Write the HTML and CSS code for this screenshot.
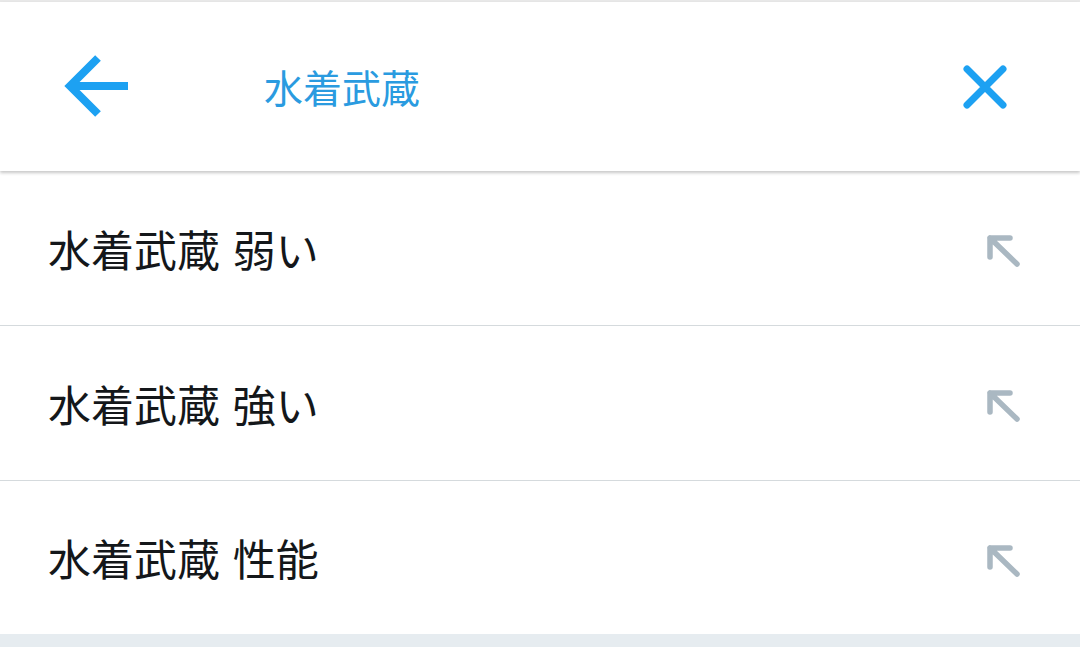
FILE: index.html
```html
<!DOCTYPE html>
<html lang="ja">
<head>
<meta charset="utf-8">
<link rel="stylesheet" href="styles.css">
</head>
<body>
<div class="page">
  <div class="topstrip"></div>
  <header class="header">
    <svg class="back" width="72" height="70" viewBox="0 0 72 70">
      <path d="M38 6 L10 34 L38 62 M10 34 H68" fill="none" stroke="#1da1f2" stroke-width="8" stroke-linejoin="miter"/>
    </svg>
    <div class="title">水着武蔵</div>
    <svg class="close" width="48" height="48" viewBox="0 0 48 48">
      <path d="M6 6 L42 42 M42 6 L6 42" fill="none" stroke="#1da1f2" stroke-width="7" stroke-linecap="round"/>
    </svg>
  </header>
  <ul class="list">
    <li class="row"><span class="text">水着武蔵 弱い</span>
      <svg class="fill" width="40" height="40" viewBox="0 0 40 40"><path d="M30 10 H10 V29 M10 10 L37 36" fill="none" stroke="#aab8c2" stroke-width="5.5" stroke-linecap="round" stroke-linejoin="round"/></svg>
    </li>
    <li class="row"><span class="text">水着武蔵 強い</span>
      <svg class="fill" width="40" height="40" viewBox="0 0 40 40"><path d="M30 10 H10 V29 M10 10 L37 36" fill="none" stroke="#aab8c2" stroke-width="5.5" stroke-linecap="round" stroke-linejoin="round"/></svg>
    </li>
    <li class="row row-last"><span class="text">水着武蔵 性能</span>
      <svg class="fill" width="40" height="40" viewBox="0 0 40 40"><path d="M30 10 H10 V29 M10 10 L37 36" fill="none" stroke="#aab8c2" stroke-width="5.5" stroke-linecap="round" stroke-linejoin="round"/></svg>
    </li>
  </ul>
  <div class="bottomstrip"></div>
</div>
</body>
</html>
```
FILE: styles.css
```css
html, body {
  margin: 0;
  padding: 0;
  background: #ffffff;
}
body {
  font-family: "Noto Sans CJK JP", "Noto Sans", sans-serif;
  overflow: hidden;
}
.page {
  width: 1080px;
  height: 647px;
  display: flex;
  flex-direction: column;
}
.topstrip {
  height: 2px;
  background: #e8e8e8;
  flex: none;
}
.header {
  flex: none;
  height: 169px;
  display: flex;
  align-items: center;
  padding: 0 71px 0 60px;
  background: #fff;
  box-shadow: 0 2px 3px rgba(0, 0, 0, 0.22);
  position: relative;
  z-index: 1;
}
.back {
  flex: none;
  display: block;
}
.title {
  margin-left: 132px;
  font-size: 39px;
  line-height: 1;
  color: #2a9be0;
  flex: 1;
}
.close {
  flex: none;
  display: block;
}
.list {
  list-style: none;
  margin: 0;
  padding: 0;
}
.row {
  height: 155px;
  box-sizing: border-box;
  border-bottom: 1px solid #d5dadd;
  display: flex;
  align-items: center;
  padding: 0 60px 0 48px;
}
.row-last {
  height: 153px;
  border-bottom: none;
}
.text {
  flex: 1;
  font-size: 43px;
  line-height: 1;
  word-spacing: 3px;
  color: #14171a;
}
.fill {
  flex: none;
  display: block;
}
.bottomstrip {
  flex: 1;
  background: #e6ecf0;
}
```
